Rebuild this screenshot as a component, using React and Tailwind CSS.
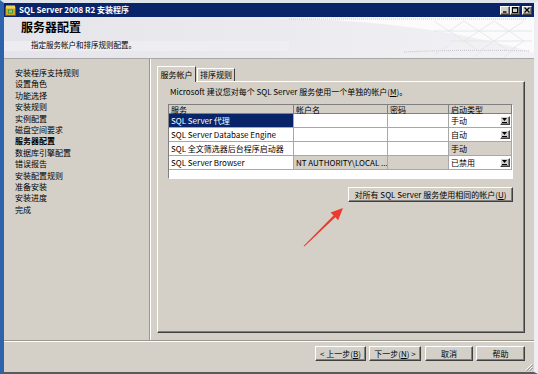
const raised =
  "bg-[#d4d0c8] border border-t-white border-l-white border-r-[#404040] border-b-[#404040] shadow-[inset_-1px_-1px_0_#808080]";

const navItems = [
  "安装程序支持规则",
  "设置角色",
  "功能选择",
  "安装规则",
  "实例配置",
  "磁盘空间要求",
  "服务器配置",
  "数据库引擎配置",
  "错误报告",
  "安装配置规则",
  "准备安装",
  "安装进度",
  "完成",
];

const rows = [
  { svc: "SQL Server 代理", start: "手动", selected: true, dd: true },
  { svc: "SQL Server Database Engine", start: "自动", dd: true },
  { svc: "SQL 全文筛选器后台程序启动器", start: "手动", startGray: true },
  {
    svc: "SQL Server Browser",
    acct: "NT AUTHORITY\\LOCAL ...",
    acctGray: true,
    pwdGray: true,
    start: "已禁用",
    dd: true,
  },
];

function DropArrow() {
  return (
    <div className={`${raised} w-[10px] h-[9px] mr-[1px] flex items-center justify-center`}>
      <svg width="6" height="5" viewBox="0 0 6 5">
        <path d="M0 0 H5 L2.5 3 Z" fill="#000" />
        <path d="M0 4.5 H5" stroke="#000" strokeWidth="1" />
      </svg>
    </div>
  );
}

function TitleIcon() {
  return (
    <svg width="11" height="11" viewBox="0 0 11 11">
      <rect x="0.5" y="2" width="10" height="8.5" fill="#d9a420" stroke="#7a5a10" strokeWidth="0.8" />
      <rect x="1" y="0.5" width="9" height="3" fill="#f2d060" />
      <rect x="3" y="4.5" width="5" height="4" fill="#3c9a3c" />
      <rect x="4" y="5.5" width="3" height="2" fill="#9fd86a" />
    </svg>
  );
}

function WinButton({ children }) {
  return (
    <div className={`${raised} w-[10px] h-[9px] flex items-center justify-center`}>
      <svg width="6" height="6" viewBox="0 0 6 6">
        {children}
      </svg>
    </div>
  );
}

export default function App() {
  return (
    <div className="relative w-[538px] h-[374px] font-['Noto_Sans_CJK_SC',sans-serif] text-[8px] text-black">
      <div className="w-full h-full flex flex-col bg-[#d4d0c8] border-l-[4px] border-l-[#2d63aa] border-r-[4px] border-r-[#eceef2] border-t-[3px] border-t-[#dfe3ea] border-b-[2px] border-b-[#5a5a5a]">
        {/* Title bar */}
        <div className="h-[14px] bg-[#0a246a] flex items-center pl-[1px] pr-[2px]">
          <TitleIcon />
          <span className="ml-[3px] text-white font-bold leading-[14px]">SQL Server 2008 R2 安装程序</span>
          <div className="ml-auto flex items-center">
            <WinButton>
              <path d="M1 5 H4.5" stroke="#000" strokeWidth="1.4" />
            </WinButton>
            <WinButton>
              <rect x="0.5" y="0.5" width="5" height="5" fill="none" stroke="#000" strokeWidth="1" />
              <path d="M0.5 1 H5.5" stroke="#000" strokeWidth="1.2" />
            </WinButton>
            <div className="w-[2px]" />
            <WinButton>
              <path d="M0.5 0.5 L5.5 5.5 M5.5 0.5 L0.5 5.5" stroke="#000" strokeWidth="1.3" />
            </WinButton>
          </div>
        </div>

        {/* Header */}
        <div className="relative h-[42px] overflow-hidden bg-gradient-to-r from-[#e4e4ea] via-[#ebebef] to-[#f2f2f5] border-b border-b-[#a8a8a8]">
          <svg className="absolute inset-0" width="530" height="42" viewBox="0 0 530 42">
            <path d="M275 1 C370 3 460 14 530 36 L530 0 Z" fill="#fbfbfc" />
            <path d="M285 2 H522" stroke="#c8c8d0" strokeWidth="1" strokeDasharray="1 1" />
            <path d="M400 35 C440 33 490 33 526 34" stroke="#c4c4cc" strokeWidth="1" strokeDasharray="1 1" fill="none" />
            <g stroke="#e2e2e8" strokeWidth="0.8" fill="none">
              <path d="M430 4 L445 14 L460 4 L475 14 L490 4 L505 14 L520 4" />
              <path d="M445 14 L460 24 L475 14 L490 24 L505 14 L520 24" />
              <path d="M430 14 H528 M445 24 H528" />
              <path d="M460 24 L475 34 L490 24 L505 34 L520 24" />
              <path d="M430 38 L445 28 M470 40 L480 32 M500 40 L512 30" />
            </g>
            <rect x="0" y="24" width="285" height="10" fill="#f0f0f3" opacity="0.7" />
          </svg>
          <div className="relative flex flex-col">
            <span className="pl-[17px] pt-[3px] text-[12px] font-bold leading-[14px]">服务器配置</span>
            <span className="pl-[27px] pt-[6px] text-[7.5px] leading-[10px]">指定服务帐户和排序规则配置。</span>
          </div>
        </div>

        {/* Main */}
        <div className="flex h-[281px]">
          <div className="w-[145px] flex flex-col pl-[11px] pt-[8px] leading-[11.4px]">
            {navItems.map((n) => (
              <span key={n} className={n === "服务器配置" ? "font-bold" : ""}>
                {n}
              </span>
            ))}
          </div>
          <div className="w-[2px] border-l border-l-[#9a9890] border-r border-r-white" />
          <div className="flex-1 flex flex-col pl-[6px] pr-[9px] pt-[7px] pb-[7px]">
            {/* Tabs */}
            <div className="flex items-end h-[15px]">
              <div className="relative z-10 h-[16px] -mb-[1px] w-[39px] bg-[#d4d0c8] border-t border-l border-t-white border-l-white border-r border-r-[#404040] flex items-center justify-center leading-[14px]">
                服务帐户
              </div>
              <div className="h-[13px] w-[38px] ml-[1px] bg-[#d4d0c8] border-t border-l border-t-white border-l-white border-r border-r-[#404040] flex items-center justify-center leading-[12px]">
                排序规则
              </div>
            </div>
            {/* Panel */}
            <div className="flex-1 flex flex-col border border-t-white border-l-white border-r-[#404040] border-b-[#404040] shadow-[inset_-1px_-1px_0_#808080] pl-[10px] pr-[11px] pt-[4px]">
              <div className="ml-[2px] leading-[11px]">
                Microsoft 建议您对每个 SQL Server 服务使用一个单独的帐户(<u>M</u>)。
              </div>
              <div className="mt-[7px] h-[75px] bg-white border border-t-[#808080] border-l-[#808080] border-r-white border-b-white flex flex-col">
                <div className="flex h-[9px] leading-[9px] bg-[#d4d0c8]">
                  <div className="w-[125px] pl-[2px] border-r border-r-[#808080] border-b border-b-[#808080]">服务</div>
                  <div className="w-[94px] pl-[2px] border-r border-r-[#808080] border-b border-b-[#808080]">帐户名</div>
                  <div className="w-[61px] pl-[2px] border-r border-r-[#808080] border-b border-b-[#808080]">密码</div>
                  <div className="flex-1 pl-[2px] border-r border-r-[#808080] border-b border-b-[#808080]">启动类型</div>
                </div>
                {rows.map((r) => (
                  <div key={r.svc} className="flex h-[14px] leading-[13px]">
                    <div
                      className={`w-[125px] pl-[2px] border-r border-b border-[#a8a8a8] whitespace-nowrap overflow-hidden ${
                        r.selected ? "bg-[#0a246a] text-white" : "bg-white"
                      }`}
                    >
                      {r.svc}
                    </div>
                    <div
                      className={`w-[94px] pl-[2px] border-r border-b border-[#a8a8a8] whitespace-nowrap overflow-hidden ${
                        r.acctGray ? "bg-[#d4d0c8]" : "bg-white"
                      }`}
                    >
                      {r.acct || ""}
                    </div>
                    <div
                      className={`w-[61px] border-r border-b border-[#a8a8a8] ${
                        r.pwdGray ? "bg-[#d4d0c8]" : "bg-white"
                      }`}
                    />
                    <div
                      className={`flex-1 flex items-center justify-between pl-[2px] border-r border-b border-[#a8a8a8] ${
                        r.startGray ? "bg-[#d4d0c8]" : "bg-white"
                      }`}
                    >
                      <span>{r.start}</span>
                      {r.dd && <DropArrow />}
                    </div>
                  </div>
                ))}
              </div>
              <div className={`${raised} self-end mt-[8px] h-[15px] w-[165px] flex items-center justify-center leading-[13px]`}>
                对所有 SQL Server 服务使用相同的帐户(<u>U</u>)
              </div>
            </div>
          </div>
        </div>

        {/* Separator */}
        <div className="h-[2px] border-t border-t-[#9a9890] border-b border-b-white" />

        {/* Bottom buttons */}
        <div className="relative flex-1 flex justify-end items-start pt-[4px] pr-[9px]">
          <div className={`${raised} w-[51px] h-[15px] flex items-center justify-center leading-[13px]`}>
            &lt; 上一步(<u>B</u>)
          </div>
          <div className={`${raised} ml-[3px] w-[52px] h-[15px] flex items-center justify-center leading-[13px]`}>
            下一步(<u>N</u>) &gt;
          </div>
          <div className={`${raised} ml-[4px] w-[48px] h-[15px] flex items-center justify-center leading-[13px]`}>
            取消
          </div>
          <div className={`${raised} ml-[3px] w-[49px] h-[15px] flex items-center justify-center leading-[13px]`}>
            帮助
          </div>
          <svg className="absolute right-[1px] bottom-[1px]" width="8" height="8" viewBox="0 0 8 8">
            <path d="M7 1 L1 7 M7 4 L4 7 M7 6.5 L6.5 7" stroke="#ffffff" strokeWidth="1" />
            <path d="M7.8 1.8 L1.8 7.8 M7.8 4.8 L4.8 7.8" stroke="#808080" strokeWidth="1" />
          </svg>
        </div>
      </div>

      {/* Red annotation arrow */}
      <svg className="absolute inset-0 pointer-events-none" width="538" height="374" viewBox="0 0 538 374">
        <polygon
          points="303.6,246 333.5,215.5 330.6,212.6 343,208 338.2,220.2 335.3,217.3 304.4,246.4"
          fill="#ec3a2e"
        />
      </svg>
    </div>
  );
}
